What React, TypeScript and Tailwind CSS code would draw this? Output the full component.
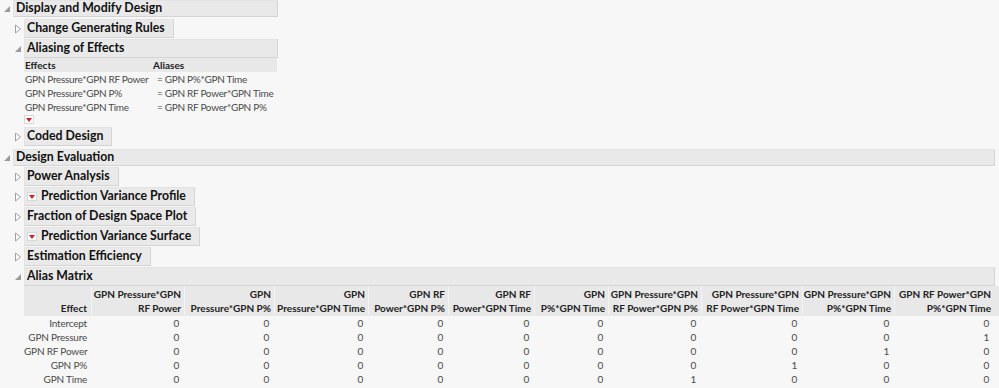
import React from 'react'

const font = { fontFamily: 'Lato, "Open Sans", sans-serif' }

function Tri({ open }: { open: boolean }) {
  if (open) {
    return (
      <svg width="8" height="8" viewBox="0 0 8 8" className="shrink-0">
        <path d="M7 1 L7 7 L1 7 Z" fill="#9a9a9a" />
      </svg>
    )
  }
  return (
    <svg width="8" height="10" viewBox="0 0 8 10" className="shrink-0">
      <path d="M1.5 1 L6.5 5 L1.5 9 Z" fill="#fff" stroke="#a0a0a0" strokeWidth="1" />
    </svg>
  )
}

function RedMenu() {
  return (
    <span className="inline-flex items-center justify-center w-[10px] h-[9px] bg-white border border-[#d8d8d8] shrink-0">
      <svg width="6" height="4" viewBox="0 0 6 4">
        <path d="M0 0 L6 0 L3 4 Z" fill="#d21f2b" />
      </svg>
    </span>
  )
}

function Node({
  title,
  open = false,
  menu = false,
  full = false,
  width,
  level = 1,
  children,
}: {
  title: string
  open?: boolean
  menu?: boolean
  full?: boolean
  width?: string
  level?: number
  children?: React.ReactNode
}) {
  return (
    <div>
      <div className={`flex items-center ${level === 0 ? 'pl-[3px]' : 'pl-[14px]'}`}>
        <span className="w-[10px] flex items-center">
          <Tri open={open} />
        </span>
        <div
          className={`flex items-center gap-[4px] bg-[#e9e9e9] border border-[#e3e3e3] border-b-[#d4d4d4] border-r-[#d4d4d4] pl-[2px] pr-[8px] ${
            level === 0 ? 'h-[17px]' : 'h-[19px]'
          } ${full ? 'flex-1 mr-[4px]' : ''} ${width ?? ''}`}
        >
          {menu && <RedMenu />}
          <span className="text-[12.3px] font-bold text-[#111] whitespace-nowrap leading-none">{title}</span>
        </div>
      </div>
      {children}
    </div>
  )
}

const aliasRows = [
  ['GPN Pressure*GPN RF Power', '= GPN P%*GPN Time'],
  ['GPN Pressure*GPN P%', '= GPN RF Power*GPN Time'],
  ['GPN Pressure*GPN Time', '= GPN RF Power*GPN P%'],
]

const cols: [string, string, string][] = [
  ['GPN Pressure*GPN', 'RF Power', 'w-[93px]'],
  ['GPN', 'Pressure*GPN P%', 'w-[90px]'],
  ['GPN', 'Pressure*GPN Time', 'w-[94px]'],
  ['GPN RF', 'Power*GPN P%', 'w-[80px]'],
  ['GPN RF', 'Power*GPN Time', 'w-[86px]'],
  ['GPN', 'P%*GPN Time', 'w-[74px]'],
  ['GPN Pressure*GPN', 'RF Power*GPN P%', 'w-[93px]'],
  ['GPN Pressure*GPN', 'RF Power*GPN Time', 'w-[101px]'],
  ['GPN Pressure*GPN', 'P%*GPN Time', 'w-[92px]'],
  ['GPN RF Power*GPN', 'P%*GPN Time', 'w-[100px]'],
]

const matrix: [string, number[]][] = [
  ['Intercept', [0, 0, 0, 0, 0, 0, 0, 0, 0, 0]],
  ['GPN Pressure', [0, 0, 0, 0, 0, 0, 0, 0, 0, 1]],
  ['GPN RF Power', [0, 0, 0, 0, 0, 0, 0, 0, 1, 0]],
  ['GPN P%', [0, 0, 0, 0, 0, 0, 0, 1, 0, 0]],
  ['GPN Time', [0, 0, 0, 0, 0, 0, 1, 0, 0, 0]],
]

function AliasMatrix() {
  return (
    <div className="ml-[24px] text-[10px] leading-[14px]">
      <div className="flex bg-[#e8e8e8] font-bold text-[#222] h-[30px] items-end pb-[1px]">
        <div className="w-[67px] text-right pr-[4px] self-end">Effect</div>
        {cols.map(([a, b, w], i) => (
          <div key={i} className={`${w} text-right pr-[3px] border-l border-[#f4f4f4] h-full flex flex-col justify-end`}>
            <div className="whitespace-nowrap">{a}</div>
            <div className="whitespace-nowrap">{b}</div>
          </div>
        ))}
      </div>
      <div className="tracking-[-0.2px]">
        {matrix.map(([name, vals]) => (
          <div key={name} className="flex text-[#4a4a4a] h-[14px]">
            <div className="w-[67px] text-right pr-[4px] whitespace-nowrap">{name}</div>
            {vals.map((v, i) => (
              <div key={i} className={`${cols[i][2]} text-right pr-[5px] border-l border-transparent`}>
                {v}
              </div>
            ))}
          </div>
        ))}
      </div>
    </div>
  )
}

export default function App() {
  return (
    <div className="w-[999px] h-[388px] bg-[#f7f7f7] overflow-hidden" style={font}>
      <Node title="Display and Modify Design" open level={0} width="w-[265px]">
        <div className="mt-[2px] flex flex-col gap-[1px]">
          <Node title="Change Generating Rules" />
          <Node title="Aliasing of Effects" open width="w-[254px]">
            <div className="ml-[24px] w-[253px] text-[10px] leading-[14px]">
              <div className="flex bg-[#e8e8e8] font-bold text-[#222] h-[14px]">
                <div className="w-[129px] pl-[1px]">Effects</div>
                <div>Aliases</div>
              </div>
              <div className="tracking-[-0.3px]">
                {aliasRows.map(([e, a]) => (
                  <div key={e} className="flex text-[#4a4a4a] h-[14px]">
                    <div className="w-[129px] pl-[1px] whitespace-nowrap">{e}</div>
                    <div className="whitespace-nowrap pl-[4px]">{a}</div>
                  </div>
                ))}
              </div>
              <div className="flex mt-[1px] mb-[2px]">
                <RedMenu />
              </div>
            </div>
          </Node>
          <Node title="Coded Design" />
        </div>
      </Node>
      <div className="mt-[3px]">
        <Node title="Design Evaluation" open level={0} full>
          <div className="mt-[1px] flex flex-col gap-[1px]">
            <Node title="Power Analysis" />
            <Node title="Prediction Variance Profile" menu />
            <Node title="Fraction of Design Space Plot" />
            <Node title="Prediction Variance Surface" menu />
            <Node title="Estimation Efficiency" />
            <Node title="Alias Matrix" open full>
              <AliasMatrix />
            </Node>
          </div>
        </Node>
      </div>
    </div>
  )
}
